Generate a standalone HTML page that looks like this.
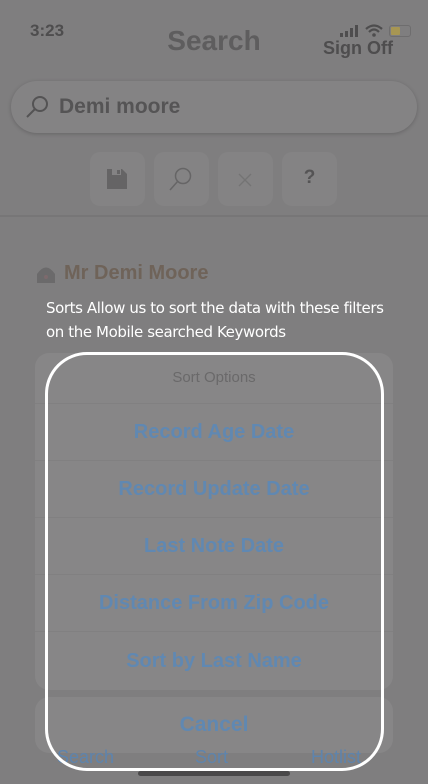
<!DOCTYPE html>
<html><head><meta charset="utf-8"><style>
*{margin:0;padding:0;box-sizing:border-box}
body{width:428px;height:784px;overflow:hidden;background:#7f7e7f;font-family:"Liberation Sans",sans-serif;position:relative}
.a{position:absolute}
.box{background:#878687;border-radius:14px}
.item{position:absolute;left:35px;width:358px;text-align:center;color:#6088b2;font-size:20px;font-weight:bold;border-top:1px solid #818081}
</style></head><body>
<div class="a" style="left:30px;top:21px;font-size:17px;font-weight:bold;color:#4e4d4e">3:23</div>
<div class="a" style="left:0;width:428px;text-align:center;top:25px;font-size:28px;font-weight:bold;color:#5e5d5e">Search</div>
<svg class="a" style="left:340px;top:25px" width="20" height="12"><rect x="0" y="8" width="3" height="4" fill="#4e4d4e"/><rect x="5" y="6" width="3" height="6" fill="#4e4d4e"/><rect x="10" y="3" width="3" height="9" fill="#4e4d4e"/><rect x="15" y="0" width="3" height="12" fill="#4e4d4e"/></svg>
<svg class="a" style="left:365px;top:24px" width="18" height="14"><path d="M1 5 Q9 -2 17 5" stroke="#4e4d4e" stroke-width="2.2" fill="none"/><path d="M4 8 Q9 3 14 8" stroke="#4e4d4e" stroke-width="2.2" fill="none"/><circle cx="9" cy="11" r="1.8" fill="#4e4d4e"/></svg>
<div class="a" style="left:389px;top:25px;width:22px;height:12px;border:1px solid #6e6d6e;border-radius:3px"><div style="margin:1px;width:9px;height:8px;background:#a79653;border-radius:1px"></div></div>
<div class="a" style="left:323px;top:38px;font-size:18px;font-weight:bold;color:#4e4d4e">Sign Off</div>
<div class="a" style="left:11px;top:81px;width:406px;height:52px;border-radius:26px;background:#848384;box-shadow:0 1px 4px rgba(0,0,0,.2)"></div>
<svg class="a" style="left:25px;top:95px" width="26" height="24"><circle cx="15" cy="9" r="7" stroke="#545354" stroke-width="2" fill="none"/><path d="M10 14 L2 22" stroke="#545354" stroke-width="2"/></svg>
<div class="a" style="left:59px;top:95px;font-size:21px;font-weight:bold;color:#555455">Demi moore</div>
<div class="a box" style="left:90px;top:152px;width:55px;height:54px;border-radius:10px;background:#848384"></div>
<div class="a box" style="left:154px;top:152px;width:55px;height:54px;border-radius:10px;background:#848384"></div>
<div class="a box" style="left:218px;top:152px;width:55px;height:54px;border-radius:10px;background:#848384"></div>
<div class="a box" style="left:282px;top:152px;width:55px;height:54px;border-radius:10px;background:#848384"></div>
<svg class="a" style="left:106px;top:168px" width="22" height="22"><path d="M1 1 H16 L21 6 V21 H1 Z" fill="#656465"/><rect x="6" y="1" width="9" height="6" fill="#848384"/><rect x="11" y="2" width="3" height="4" fill="#656465"/></svg>
<svg class="a" style="left:168px;top:166px" width="26" height="26"><circle cx="15" cy="10" r="7.5" stroke="#666566" stroke-width="1.5" fill="none"/><path d="M10 15 L2 24" stroke="#666566" stroke-width="1.5"/></svg>
<svg class="a" style="left:237px;top:172px" width="16" height="16"><path d="M2 2 L14 14 M14 2 L2 14" stroke="#747374" stroke-width="1.3"/></svg>
<div class="a" style="left:282px;top:167px;width:55px;text-align:center;font-size:19px;font-weight:bold;color:#555455">?</div>
<div class="a" style="left:0;top:215px;width:428px;height:2px;background:#777677"></div>
<svg class="a" style="left:35px;top:263px" width="22" height="22"><path d="M2 20 V11 Q11 -2 20 11 V20 Z" fill="#6b6a6b"/><circle cx="11" cy="14" r="2" fill="#7d6a6d"/></svg>
<div class="a" style="left:64px;top:262px;font-size:20px;font-weight:bold;color:#6f6359">Mr Demi Moore</div>
<div class="a" style="left:46px;top:296px;font-size:15px;line-height:24px;color:#fff;font-family:'DejaVu Sans','Liberation Sans',sans-serif;letter-spacing:-0.4px">Sorts Allow us to sort the data with these filters<br>on the Mobile searched Keywords</div>
<div class="a box" style="left:35px;top:353px;width:358px;height:337px"></div>
<div class="a" style="left:35px;top:369px;width:358px;text-align:center;font-size:15px;color:#6a696a">Sort Options</div>
<div class="item" style="top:403px;height:57px;line-height:57px">Record Age Date</div>
<div class="item" style="top:460px;height:57px;line-height:57px">Record Update Date</div>
<div class="item" style="top:517px;height:57px;line-height:57px">Last Note Date</div>
<div class="item" style="top:574px;height:57px;line-height:57px">Distance From Zip Code</div>
<div class="item" style="top:631px;height:59px;line-height:59px">Sort by Last Name</div>
<div class="a box" style="left:35px;top:697px;width:358px;height:56px;line-height:56px;text-align:center;font-size:21px;font-weight:bold;color:#6088b2">Cancel</div>
<div class="a" style="left:35px;top:747px;width:358px;height:20px;font-size:18px;color:#5e84ad">
<span class="a" style="left:22px;top:0">Search</span><span class="a" style="left:160px;top:0">Sort</span><span class="a" style="left:276px;top:0">Hotlist</span></div>
<div class="a" style="left:138px;top:771px;width:152px;height:5px;border-radius:3px;background:#4a494a"></div>
<div class="a" style="left:45px;top:352px;width:339px;height:419px;border:3px solid #fff;border-radius:42px"></div>
</body></html>
